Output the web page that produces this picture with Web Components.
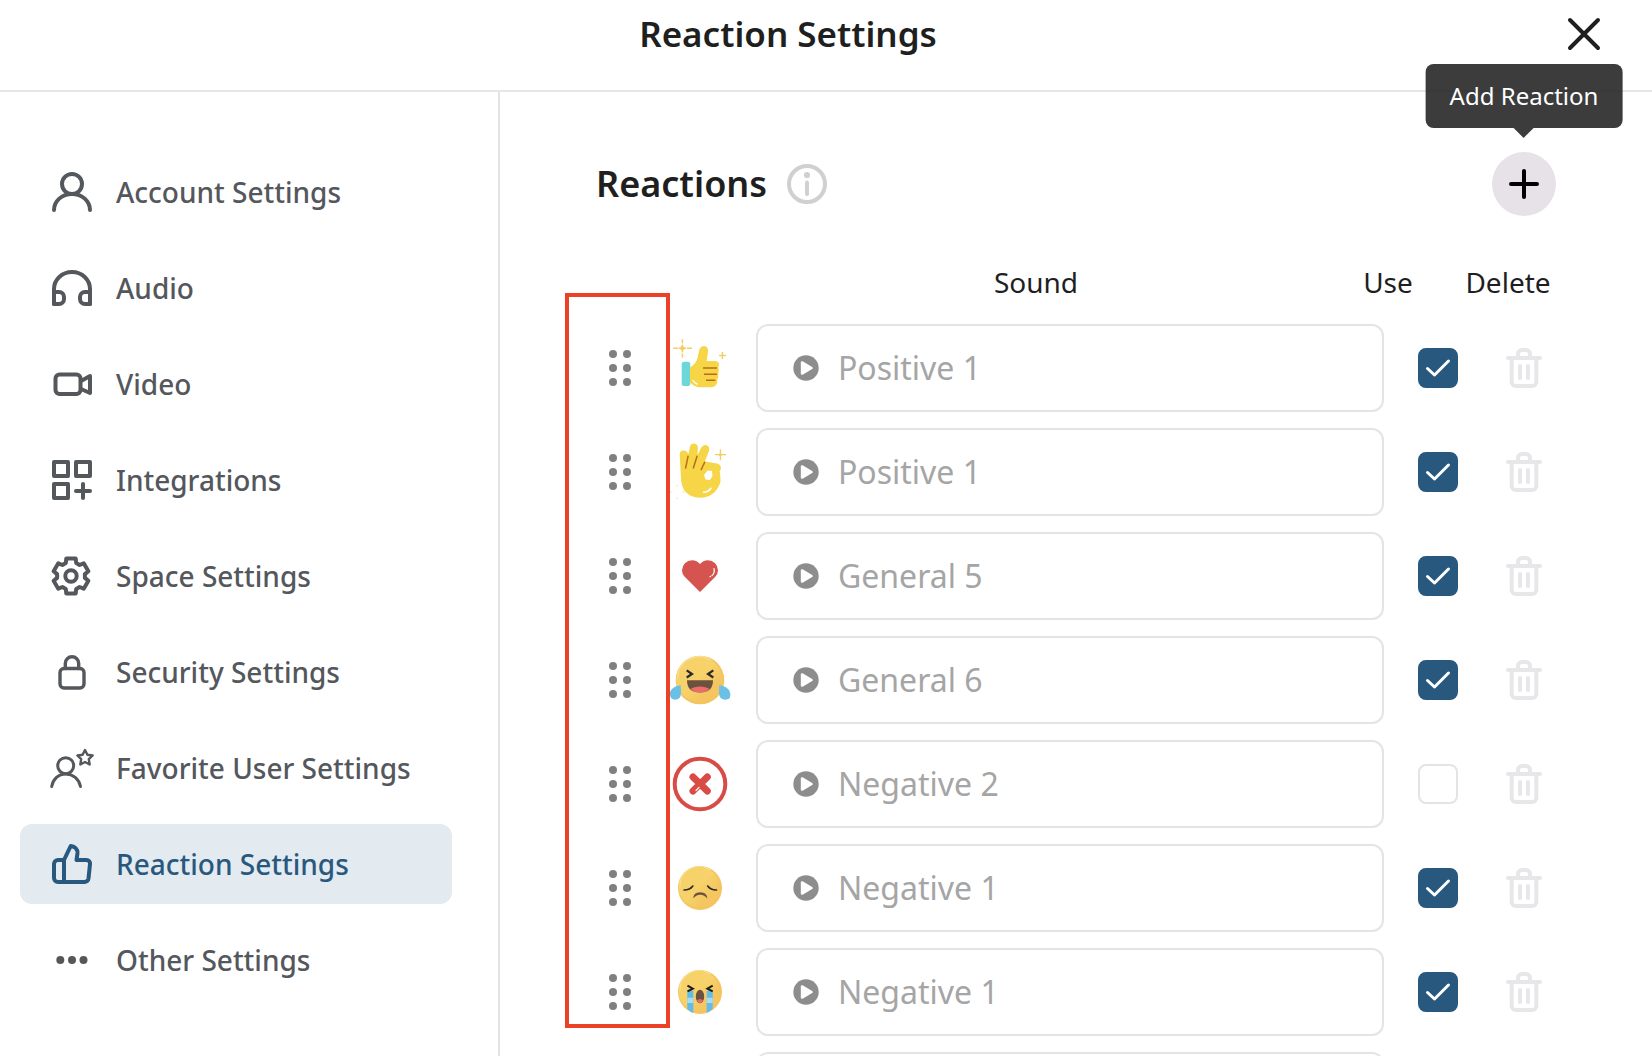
<!DOCTYPE html>
<html lang="en">
<head>
<meta charset="utf-8">
<meta name="viewport" content="width=device-width, initial-scale=1">
<title>Reaction Settings</title>
<style>
    body {
        margin: 0;
        background: #fff;
        color: #1f1f1f;
        font: 400 28px/40px "Noto Sans", sans-serif;
        --line: #e6e2e8;
        --accent: #29587f;
        --muted: #54575c;
    }
</style>
</head>
<body>
<settings-dialog heading="Reaction Settings">
    <settings-nav slot="nav">
        <nav-item icon="user" href="#account">Account Settings</nav-item>
        <nav-item icon="headphones" href="#audio">Audio</nav-item>
        <nav-item icon="video" href="#video">Video</nav-item>
        <nav-item icon="apps" href="#integrations">Integrations</nav-item>
        <nav-item icon="gear" href="#space">Space Settings</nav-item>
        <nav-item icon="lock" href="#security">Security Settings</nav-item>
        <nav-item icon="favorite" href="#favorite">Favorite User Settings</nav-item>
        <nav-item icon="thumb" href="#reactions" active>Reaction Settings</nav-item>
        <nav-item icon="dots" href="#other">Other Settings</nav-item>
    </settings-nav>
    <reaction-panel heading="Reactions"></reaction-panel>
</settings-dialog>

<script>
/** Points of a closed outline given as [degrees from top, radius]. */
function polar(cx, cy, points) {
    return 'M' + points.map(([deg, r]) => {
        const a = deg * Math.PI / 180;
        return (cx + r * Math.sin(a)).toFixed(1) + ' ' + (cy - r * Math.cos(a)).toFixed(1);
    }).join('L') + 'z';
}

const gear = polar(19, 20, [0, 60, 120, 180, 240, 300].flatMap(d =>
    [[d - 15, 18], [d + 15, 18], [d + 22, 14], [d + 38, 14]]));
const star = polar(33, 10, [0, 72, 144, 216, 288].flatMap(d => [[d, 8], [d + 36, 4]]));

// Line icons, 40 x 40
const ICONS = {
    user: '<circle cx="20" cy="12" r="10"/><path d="M2 38C2 29 10 22 20 22s18 7 18 16"/>',
    headphones: '<path d="M2 36V21a18 17 0 0 1 36 0v15"/><path d="M2 24h5a5 5 0 0 1 5 5v2a5 5 0 0 1-5 5H2zM38 24h-5a5 5 0 0 0-5 5v2a5 5 0 0 0 5 5h5z"/>',
    video: '<rect x="3.5" y="10.5" width="25" height="19.5" rx="4"/><path d="M29 17l9-5v17l-9-4"/>',
    apps: '<rect x="2" y="2" width="14" height="14"/><rect x="24" y="2" width="14" height="14"/><rect x="2" y="24" width="14" height="14"/><path d="M24 31h14M31 24v14"/>',
    gear: '<path d="' + gear + '"/><circle cx="19" cy="20" r="5.7"/>',
    lock: '<g stroke-width="3.4"><rect x="8" y="16.5" width="24" height="19.5" rx="4"/><path d="M13.3 16.5v-5a6.7 6.7 0 0 1 13.4 0v5"/></g>',
    favorite: '<g stroke-width="3"><circle cx="13.7" cy="17.7" r="8"/><path d="M-.3 38.5C1 31 6.5 26 13.7 26S27 31 28.5 38.5"/></g><path stroke-width="2.4" d="' + star + '"/>',
    thumb: '<path d="M12 16H6a4 4 0 0 0-4 4v14a4 4 0 0 0 4 4h26.5a4 4 0 0 0 4-3.5L38 20a3.6 3.6 0 0 0-3.6-4H24.5l1-7c.3-4-3-6.8-6.8-7L12 16z"/><path d="M12 16v22"/>',
    dots: '<g fill="currentColor" stroke="none"><circle cx="8.3" cy="20" r="4"/><circle cx="20" cy="20" r="4"/><circle cx="31.5" cy="20" r="4"/></g>',
    info: '<circle cx="20" cy="20" r="18"/><circle cx="20" cy="11" r="3.1" fill="currentColor" stroke="none"/><path d="M20 18.5V30"/>',
    close: '<path d="M6 6l28 28M34 6L6 34"/>',
    plus: '<path d="M20 7v26M7 20h26"/>',
    check: '<path stroke-width="3" d="M9.5 20.5l7 6.5 14-14"/>',
    trash: '<path d="M4 10h32M7.7 10v24a4 4 0 0 0 4 4h16.6a4 4 0 0 0 4-4V10M14 10V6a4 4 0 0 1 4-4h4a4 4 0 0 1 4 4v4M16 18v12M24 18v12"/>',
    play: '<circle cx="20" cy="20" r="12.7" fill="currentColor" stroke="none"/><path fill="#fff" stroke="#fff" stroke-width="2.4" d="M16 14.4v11.2L25.6 20z"/>',
    handle: '<g fill="currentColor" stroke="none">' +
        [6, 20, 34].map(y => '<circle cx="13" cy="' + y + '" r="4"/><circle cx="27" cy="' + y + '" r="4"/>').join('') + '</g>'
};

const face = r =>
    '<defs><linearGradient id="skin" x1="0" y1="0" x2="1" y2="1"><stop offset=".5" stop-color="#f7d169"/><stop offset=".75" stop-color="#f4c560"/></linearGradient></defs>' +
    '<circle cx="32" cy="32" r="' + r + '" fill="#f4c55f"/>' +
    '<circle cx="31" cy="31" r="' + (r - 1.5) + '" fill="url(#skin)"/>' +
    '<path d="M' + (34 - r) + ' 30A' + (r - 3) + ' ' + (r - 3) + ' 0 0 1 42 ' + (36 - r) + '" fill="none" stroke="#fae08f" stroke-width="1.2" stroke-linecap="round"/>';

// Reaction pictures, 64 x 64
const EMOJI = {
    like: '<rect x="13.7" y="25.7" width="8.6" height="24.3" rx="2.5" fill="#6dd6d9"/>' +
        '<path fill="#f6d546" d="M22 31.5Q28 28 29.5 22L31.5 13Q33.5 9 37.5 10.2Q40.5 12 40 16L38.6 25H47.5Q51 25.5 51 28.5Q51 30.5 50.3 31.5Q51.5 34 50.3 37.5Q50.8 41 49.3 43.5Q50 47 47.5 49.5Q46.5 51.3 43 51.3H32Q27 51.3 22 46.5z"/>' +
        '<path stroke="#b96c1e" stroke-width="1.6" d="M35 32h14M36 38.3h13M38 44.3h9.3"/>' +
        '<path stroke="#fff" stroke-width="1.4" stroke-linecap="round" fill="none" d="M25 44.5q1.5 2.5 4 3.5"/>' +
        '<path stroke="#f3cf63" stroke-width="1.5" d="M5.3 12.3h5M11 12.3h7M19 12.3h5M14.4 3.3v4M14.4 8.5v8M14.4 17.5v4M51 19.4h7M54.4 16v7"/>' +
        '<circle cx="14.4" cy="12.3" r="2.2" fill="#f3cf63"/>',
    ok: '<path fill="#f6d546" fill-rule="evenodd" d="M11.7 15Q11.5 10.5 15.5 10.5Q19.5 10.5 20.2 14.5L21.7 8Q22 3.5 26 3.4Q30 3.7 29.9 8L29.5 15L33 8Q35 4.3 38.8 5.2Q42 7 41 11L36.8 21.5L49 23.5Q53 24.5 52.9 28Q52.8 30 51.7 31Q52.7 38 52.5 42Q47 57.7 32 57.7Q13.5 57 13 38zM39.5 30.5L36 35l1.5 4.5L42 40l2.5-4-.5-5z"/>' +
        '<path stroke="#b96c1e" stroke-width="1.5" d="M20.2 15.7l-2.7 13M29.2 15.7l-4 12.8M36.9 21.7L33 30"/>' +
        '<path stroke="#fff" stroke-width="1.6" stroke-linecap="round" fill="none" d="M35.5 52.3q4.5 0 7.5-4"/>' +
        '<path stroke="#f3cf63" stroke-width="1.3" d="M47 14.7h11M52.4 9.3v11"/><circle cx="52.4" cy="14.7" r="1.5" fill="#f3cf63"/>' +
        '<path stroke="#f8e7ae" stroke-width="1.4" d="M8.3 46h1.4M2.3 52h1.4M14.7 52h1.4M8.3 58.3h1.4"/>',
    heart: '<path fill="#d5544f" d="M32 48L16.5 32.5Q14 30 14 26.2A10 10 0 0 1 24 16.2Q29 16.2 32 20Q35 16.2 40 16.2A10 10 0 0 1 50 26.2Q50 30 47.5 32.5z"/>' +
        '<path fill="none" stroke="#fff" stroke-width="1.2" stroke-linecap="round" d="M46 24.5q1 4.5-2 7M42.5 32.5l-.5.3"/>',
    laugh: face(24.3) +
        '<path fill="none" stroke="#2b2a26" stroke-width="2.2" d="M18.7 22.3L24 26l-5.3 3.5M45.3 22.3L40 26l5.3 3.5"/>' +
        '<path fill="#6b523f" d="M19 32.3h26Q45 44.5 32 44.5T19 32.3z"/><path fill="#ea6d6a" d="M22.5 41Q26 38.5 32 38.5t9.5 2.5Q38 44.5 32 44.5T22.5 41z"/>' +
        '<path fill="#6bc0e6" d="M12.7 37.3Q4 38 2 44.5Q1 51 7 51.8Q13 51.5 13 45zM51.3 37.3Q60 38 62 44.5Q64 51 57.5 51.8Q51 51.5 51 45z"/>',
    cross: '<circle cx="32" cy="32" r="25.3" fill="#fff" stroke="#d94c46" stroke-width="4"/>' +
        '<path stroke="#d94c46" stroke-width="7" stroke-linecap="round" d="M25 25l14.3 14M39.3 25L25 39"/>' +
        '<path stroke="#fff" stroke-width="1.2" stroke-linecap="round" d="M28 38.5l3-3.2"/>',
    sad: face(22) +
        '<path fill="none" stroke="#2b2a26" stroke-width="1.6" stroke-linecap="round" d="M16 34Q22 34 24.8 30M48.5 34Q42.5 34 39.7 30"/>' +
        '<path fill="#6b523f" d="M25.2 42.5Q25.5 36.3 32.2 36.2Q39 36.3 39.3 42.5Q36.5 39 32.2 38.8Q28 39 25.2 42.5z"/>',
    cry: face(22) +
        '<path fill="#63bce8" d="M19.3 30.7h6V53q-3-1-6-4zM38.7 30.7h6v18q-3 3-6 4.3z"/>' +
        '<path fill="#a5def5" d="M19.3 37.7h6V43h-6zM38.7 37.7h6V43h-6z"/>' +
        '<path fill="none" stroke="#1d1d1b" stroke-width="2" d="M19.5 25.7l5.3 3-5.3 2.6M44.7 25.7l-5.3 3 5.3 2.6"/>' +
        '<ellipse cx="32" cy="36.5" rx="4.2" ry="6.7" fill="#6b523f"/><path fill="#ea6d6a" d="M29 40.5q3-3 6 0-1 2.6-3 2.6t-3-2.6z"/>'
};

const REACTIONS = [
    { emoji: 'like', sound: 'Positive 1', use: true },
    { emoji: 'ok', sound: 'Positive 1', use: true },
    { emoji: 'heart', sound: 'General 5', use: true },
    { emoji: 'laugh', sound: 'General 6', use: true },
    { emoji: 'cross', sound: 'Negative 2', use: false },
    { emoji: 'sad', sound: 'Negative 1', use: true },
    { emoji: 'cry', sound: 'Negative 1', use: true },
    { emoji: '', sound: '', use: false }
];

customElements.define('line-icon', class extends HTMLElement {
    connectedCallback() {
        if (this.shadowRoot) return;
        this.attachShadow({ mode: 'open' }).innerHTML =
            '<style>' +
            ':host{display:block;flex:none;width:40px;height:40px;}' +
            'svg{display:block;width:100%;height:100%;overflow:visible;fill:none;stroke:currentColor;stroke-width:4;stroke-linecap:round;stroke-linejoin:round;}' +
            '</style>' +
            '<svg viewBox="0 0 40 40" aria-hidden="true">' + (ICONS[this.getAttribute('name')] || '') + '</svg>';
    }
});

customElements.define('reaction-emoji', class extends HTMLElement {
    connectedCallback() {
        if (this.shadowRoot) return;
        this.attachShadow({ mode: 'open' }).innerHTML =
            '<style>:host{display:block;width:64px;height:64px;}svg{display:block;width:100%;height:100%;}</style>' +
            '<svg viewBox="0 0 64 64" aria-hidden="true">' + (EMOJI[this.getAttribute('name')] || '') + '</svg>';
    }
});

customElements.define('nav-item', class extends HTMLElement {
    connectedCallback() {
        if (this.shadowRoot) return;
        const current = this.hasAttribute('active') ? ' aria-current="page"' : '';
        this.attachShadow({ mode: 'open' }).innerHTML =
            '<style>' +
            ':host{display:block;}' +
            'a{display:flex;align-items:center;gap:24px;height:80px;padding:0 32px;border-radius:12px;box-sizing:border-box;color:var(--muted);font-weight:500;text-decoration:none;white-space:nowrap;}' +
            'a[aria-current]{background:#e3eaf0;color:var(--accent);}' +
            '</style>' +
            '<a href="' + this.getAttribute('href') + '"' + current + '>' +
            '<line-icon name="' + this.getAttribute('icon') + '"></line-icon><span><slot></slot></span></a>';
    }
});

customElements.define('settings-nav', class extends HTMLElement {
    connectedCallback() {
        if (this.shadowRoot) return;
        this.attachShadow({ mode: 'open' }).innerHTML =
            '<style>' +
            ':host{display:block;box-sizing:border-box;padding:60px 46px 20px 20px;border-right:2px solid var(--line);}' +
            'nav{display:flex;flex-direction:column;gap:16px;}' +
            '</style>' +
            '<nav aria-label="Settings"><slot></slot></nav>';
    }
});

customElements.define('settings-dialog', class extends HTMLElement {
    connectedCallback() {
        if (this.shadowRoot) return;
        this.attachShadow({ mode: 'open' }).innerHTML =
            '<style>' +
            ':host{display:flex;flex-direction:column;height:100vh;overflow:hidden;}' +
            'header{display:flex;align-items:center;padding:0 36px 22px 24px;border-bottom:2px solid #e5e5ea;}' +
            'h1{flex:1;margin:0;text-align:center;font-size:35px;line-height:68px;font-weight:600;}' +
            'button{display:grid;place-items:center;width:64px;height:64px;padding:0;border:0;background:none;color:inherit;cursor:pointer;}' +
            '.body{flex:1;min-height:0;display:grid;grid-template:minmax(0,1fr) / 500px minmax(0,1fr);}' +
            '</style>' +
            '<header><h1>' + this.getAttribute('heading') + '</h1>' +
            '<button type="button" aria-label="Close"><line-icon name="close"></line-icon></button></header>' +
            '<div class="body"><slot name="nav"></slot><slot></slot></div>';
    }
});

customElements.define('tool-tip', class extends HTMLElement {
    connectedCallback() {
        if (this.shadowRoot) return;
        this.attachShadow({ mode: 'open' }).innerHTML =
            '<style>' +
            ':host{display:block;position:relative;}' +
            '.tip{position:absolute;z-index:2;left:50%;bottom:calc(100% + 24px);transform:translateX(-50%);padding:12px 24px;border-radius:8px;background:rgba(33,33,33,.88);color:#fff;font-size:24px;white-space:nowrap;}' +
            '.tip::after{content:"";position:absolute;top:100%;left:50%;margin-left:-10px;border:10px solid transparent;border-bottom:0;border-top-color:rgba(33,33,33,.88);}' +
            '</style>' +
            '<slot></slot><div class="tip" role="tooltip">' + this.getAttribute('text') + '</div>';
    }
});

/** Play button and sound drop-down in one bordered field. */
customElements.define('sound-select', class extends HTMLElement {
    connectedCallback() {
        if (this.shadowRoot) return;
        const sound = this.getAttribute('value');
        this.attachShadow({ mode: 'open' }).innerHTML =
            '<style>' +
            ':host{display:flex;align-items:center;gap:12px;height:88px;padding:0 28px;box-sizing:border-box;border:2px solid var(--line);border-radius:12px;}' +
            'button{padding:0;border:0;background:none;color:#8d8d8d;cursor:pointer;}' +
            'select{flex:1;min-width:0;height:48px;margin:0;padding:0;border:0;background:none;appearance:none;font:inherit;font-size:32px;line-height:48px;color:#a5a5a5;opacity:1;}' +
            '</style>' +
            '<button type="button" aria-label="Play sound"><line-icon name="play"></line-icon></button>' +
            '<select aria-label="Sound" disabled><option>' + sound + '</option></select>';
    }
});

customElements.define('check-box', class extends HTMLElement {
    connectedCallback() {
        if (this.shadowRoot) return;
        this.attachShadow({ mode: 'open' }).innerHTML =
            '<style>' +
            ':host{display:grid;width:40px;height:40px;color:#fff;}' +
            'input,line-icon{grid-area:1/1;}' +
            'input{appearance:none;width:40px;height:40px;margin:0;box-sizing:border-box;border:2px solid var(--line);border-radius:8px;}' +
            'input:checked{border-color:var(--accent);background:var(--accent);}' +
            'line-icon{pointer-events:none;visibility:hidden;}' +
            'input:checked + line-icon{visibility:visible;}' +
            '</style>' +
            '<input type="checkbox" aria-label="Use"' + (this.hasAttribute('checked') ? ' checked' : '') + '>' +
            '<line-icon name="check"></line-icon>';
    }
});

customElements.define('reaction-table', class extends HTMLElement {
    connectedCallback() {
        if (this.shadowRoot) return;
        const rows = REACTIONS.map(r =>
            '<tr>' +
            '<td><button type="button" class="handle" aria-label="Reorder"><line-icon name="handle"></line-icon></button></td>' +
            '<td><reaction-emoji name="' + r.emoji + '"></reaction-emoji></td>' +
            '<td class="sound"><sound-select value="' + r.sound + '"></sound-select></td>' +
            '<td><check-box' + (r.use ? ' checked' : '') + '></check-box></td>' +
            '<td><button type="button" class="delete" aria-label="Delete"><line-icon name="trash"></line-icon></button></td>' +
            '</tr>').join('');

        this.attachShadow({ mode: 'open' }).innerHTML =
            '<style>' +
            ':host{display:block;overflow-y:auto;scrollbar-width:none;}' +
            'table,thead{display:block;}' +
            'tbody{display:grid;gap:16px;}' +
            'tr{display:grid;grid-template-columns:48px 64px minmax(0,1fr) 60px 64px;column-gap:24px;align-items:center;}' +
            'thead tr{grid-template-columns:48px 64px minmax(0,1fr) 96px 96px;padding-bottom:20px;}' +
            'th{padding:0;font-weight:400;line-height:44px;}' +
            'td{display:grid;place-items:center;padding:0;}' +
            'td.sound{place-items:stretch;}' +
            'button{padding:0;border:0;background:none;}' +
            '.handle{color:#808080;cursor:grab;}' +
            '.delete{color:#e7e7e9;}' +
            '</style>' +
            '<table><thead><tr><td></td><td></td><th scope="col">Sound</th><th scope="col">Use</th><th scope="col">Delete</th></tr></thead>' +
            '<tbody>' + rows + '</tbody></table>';
    }
});

customElements.define('reaction-panel', class extends HTMLElement {
    connectedCallback() {
        if (this.shadowRoot) return;
        this.attachShadow({ mode: 'open' }).innerHTML =
            '<style>' +
            ':host{display:flex;flex-direction:column;gap:44px;min-height:0;padding:60px 96px 0;}' +
            '.top{display:flex;align-items:center;gap:20px;}' +
            'h2{margin:0;font-size:36px;line-height:48px;font-weight:600;}' +
            '.info{padding:0;border:0;background:none;color:#d0d0d2;}' +
            'tool-tip{margin-left:auto;}' +
            '.add{display:grid;place-items:center;width:64px;height:64px;padding:0;border:0;border-radius:50%;background:#e6e2e8;color:#000;cursor:pointer;}' +
            '.list{position:relative;flex:1;min-height:0;display:flex;}' +
            'reaction-table{flex:1;min-width:0;}' +
            '.frame{position:absolute;top:33px;bottom:28px;left:-31px;width:105px;box-sizing:border-box;border:4px solid #ea4127;pointer-events:none;}' +
            '</style>' +
            '<div class="top"><h2>' + this.getAttribute('heading') + '</h2>' +
            '<button type="button" class="info" aria-label="About reactions"><line-icon name="info"></line-icon></button>' +
            '<tool-tip text="Add Reaction"><button type="button" class="add" aria-label="Add Reaction"><line-icon name="plus"></line-icon></button></tool-tip></div>' +
            '<div class="list"><reaction-table></reaction-table><div class="frame"></div></div>';
    }
});
</script>
</body>
</html>
